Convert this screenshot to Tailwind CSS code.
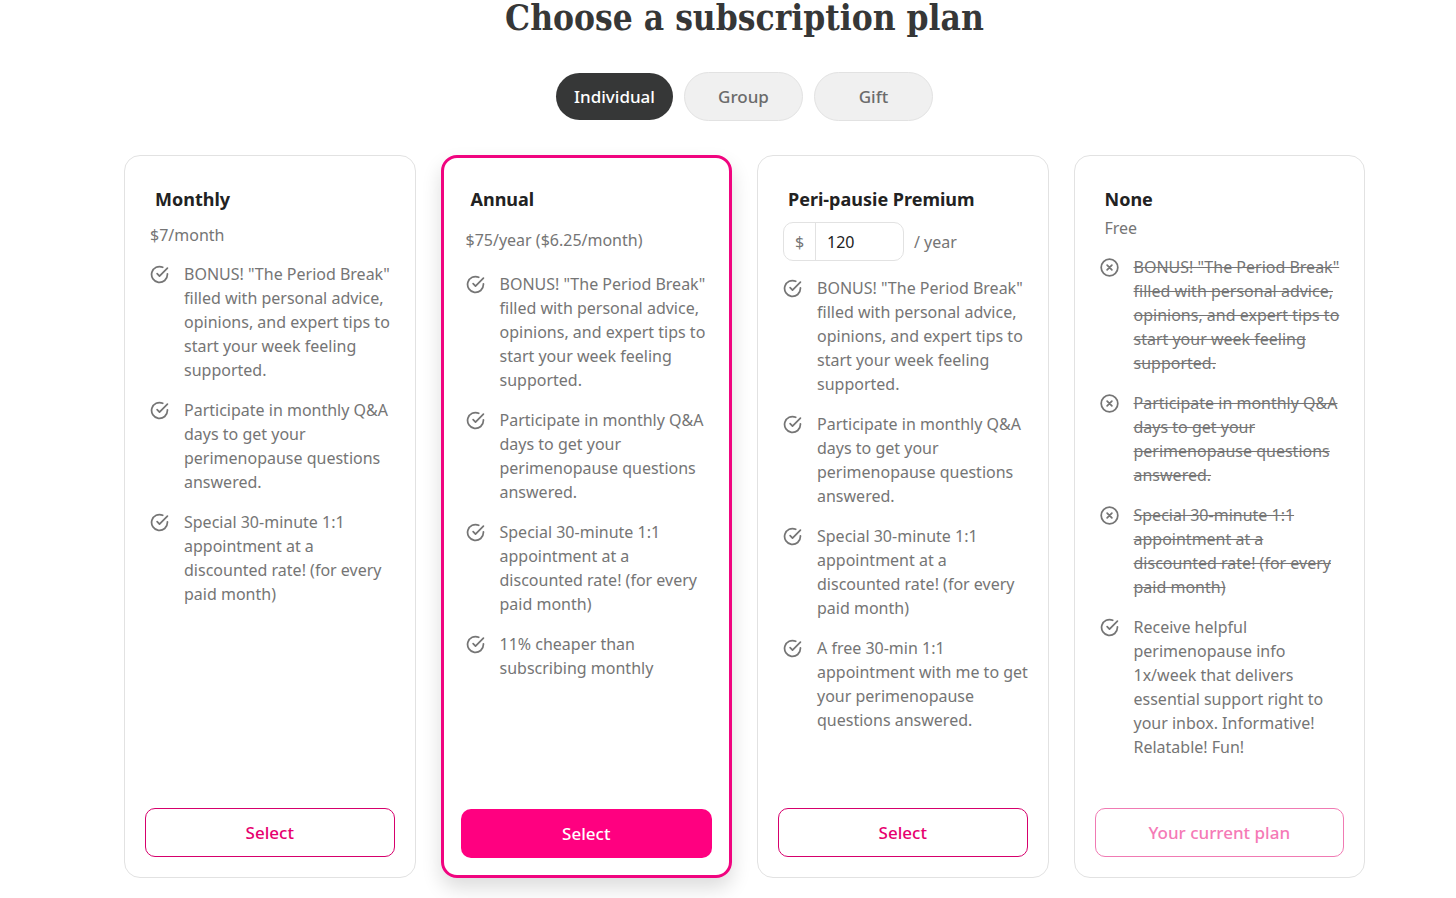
<!DOCTYPE html>
<html lang="en">
<head>
<meta charset="utf-8">
<meta name="viewport" content="width=device-width, initial-scale=1">
<title>Choose a subscription plan</title>
<script src="https://cdn.jsdelivr.net/npm/@tailwindcss/browser@4"></script>
</head>
<body class="bg-white font-['Noto_Sans','Open_Sans',sans-serif] text-base leading-6 text-[#757575]">
<svg class="hidden" aria-hidden="true">
  <symbol id="check" viewBox="0 0 24 24" fill="none" stroke="currentColor" stroke-width="2.2" stroke-linecap="round" stroke-linejoin="round"><path d="M22 11.08V12a10 10 0 1 1-5.93-9.14"/><path d="M22 4 12 14.01l-3-3"/></symbol>
  <symbol id="cross" viewBox="0 0 24 24" fill="none" stroke="currentColor" stroke-width="2.2" stroke-linecap="round" stroke-linejoin="round"><circle cx="12" cy="12" r="10.5"/><path d="m15 9-6 6M9 9l6 6"/></symbol>
</svg>
<main class="flex flex-col pr-[91px] pb-5 pl-[124px]">
  <h1 class="text-center font-['Roboto_Slab','DejaVu_Serif_Condensed','DejaVu_Serif',serif] text-[35px] leading-9 font-bold text-[#363737]">Choose a subscription plan</h1>
  <div class="mt-9 flex items-center justify-center gap-[11px] text-[17px] font-medium">
    <button type="button" aria-pressed="true" class="h-[47px] w-[117px] rounded-full bg-[#363737] text-white">Individual</button>
    <button type="button" class="h-[49px] w-[119px] rounded-full border border-[#e2e2e2] bg-[#f0f0f0] text-[#6b6b6b]">Group</button>
    <button type="button" class="h-[49px] w-[119px] rounded-full border border-[#e2e2e2] bg-[#f0f0f0] text-[#6b6b6b]">Gift</button>
  </div>
  <div class="mt-[34px] grid grid-cols-4 gap-[25px]">
    <section class="flex min-h-[723px] flex-col rounded-2xl border border-[#e2e2e2] p-5">
      <h2 class="mt-[11px] ml-[10px] text-lg leading-6 font-bold text-[#222]">Monthly</h2>
      <p class="mt-3 ml-[5px]">$7/month</p>
      <ul class="mt-[15px] -mr-0.5 ml-[5px] flex flex-col gap-4">
        <li class="flex gap-[15px]"><svg class="mt-[3px] size-[19px] shrink-0"><use href="#check"/></svg><span>BONUS! "The Period Break" filled with personal advice, opinions, and expert tips to start your week feeling supported.</span></li>
        <li class="flex gap-[15px]"><svg class="mt-[3px] size-[19px] shrink-0"><use href="#check"/></svg><span>Participate in monthly Q&amp;A days to get your perimenopause questions answered.</span></li>
        <li class="flex gap-[15px]"><svg class="mt-[3px] size-[19px] shrink-0"><use href="#check"/></svg><span>Special 30-minute 1:1 appointment at a discounted rate! (for every paid month)</span></li>
      </ul>
      <button type="button" class="mt-auto h-[49px] rounded-[10px] border border-[#d6006c] text-[17px] font-medium text-[#e6006f]">Select</button>
    </section>
    <section class="flex min-h-[723px] flex-col rounded-2xl border-3 border-[#f0047f] p-[17px] shadow-[0_10px_20px_rgba(0,0,0,0.14)]">
      <h2 class="mt-3 ml-[10px] text-lg leading-6 font-bold text-[#222]">Annual</h2>
      <p class="mt-[17px] ml-[5px]">$75/year ($6.25/month)</p>
      <ul class="mt-5 -mr-0.5 ml-[5px] flex flex-col gap-4">
        <li class="flex gap-[15px]"><svg class="mt-[3px] size-[19px] shrink-0"><use href="#check"/></svg><span>BONUS! "The Period Break" filled with personal advice, opinions, and expert tips to start your week feeling supported.</span></li>
        <li class="flex gap-[15px]"><svg class="mt-[3px] size-[19px] shrink-0"><use href="#check"/></svg><span>Participate in monthly Q&amp;A days to get your perimenopause questions answered.</span></li>
        <li class="flex gap-[15px]"><svg class="mt-[3px] size-[19px] shrink-0"><use href="#check"/></svg><span>Special 30-minute 1:1 appointment at a discounted rate! (for every paid month)</span></li>
        <li class="flex gap-[15px]"><svg class="mt-[3px] size-[19px] shrink-0"><use href="#check"/></svg><span>11% cheaper than subscribing monthly</span></li>
      </ul>
      <button type="button" class="mt-auto h-[49px] rounded-[10px] bg-[#ff0080] text-[17px] font-medium text-white">Select</button>
    </section>
    <section class="flex min-h-[723px] flex-col rounded-2xl border border-[#e2e2e2] p-5">
      <h2 class="mt-[11px] ml-[10px] text-lg leading-6 font-bold text-[#222]">Peri-pausie Premium</h2>
      <div class="mt-[11px] ml-[5px] flex items-center gap-[10px]">
        <label class="flex h-[39px] w-[121px] overflow-hidden rounded-[10px] border border-[#e2e2e2]">
          <span class="flex w-8 items-center justify-center border-r border-[#e2e2e2]">$</span>
          <input type="text" value="120" aria-label="Amount in dollars per year" class="min-w-0 flex-1 px-[11px] text-[#222] outline-none">
        </label>
        <span>/ year</span>
      </div>
      <ul class="mt-[15px] -mr-0.5 ml-[5px] flex flex-col gap-4">
        <li class="flex gap-[15px]"><svg class="mt-[3px] size-[19px] shrink-0"><use href="#check"/></svg><span>BONUS! "The Period Break" filled with personal advice, opinions, and expert tips to start your week feeling supported.</span></li>
        <li class="flex gap-[15px]"><svg class="mt-[3px] size-[19px] shrink-0"><use href="#check"/></svg><span>Participate in monthly Q&amp;A days to get your perimenopause questions answered.</span></li>
        <li class="flex gap-[15px]"><svg class="mt-[3px] size-[19px] shrink-0"><use href="#check"/></svg><span>Special 30-minute 1:1 appointment at a discounted rate! (for every paid month)</span></li>
        <li class="flex gap-[15px]"><svg class="mt-[3px] size-[19px] shrink-0"><use href="#check"/></svg><span>A free 30-min 1:1 appointment with me to get your perimenopause questions answered.</span></li>
      </ul>
      <button type="button" class="mt-auto h-[49px] rounded-[10px] border border-[#d6006c] text-[17px] font-medium text-[#e6006f]">Select</button>
    </section>
    <section class="flex min-h-[723px] flex-col rounded-2xl border border-[#e2e2e2] p-5">
      <h2 class="mt-[11px] ml-[10px] text-lg leading-6 font-bold text-[#222]">None</h2>
      <p class="mt-[5px] ml-[10px]">Free</p>
      <ul class="mt-[15px] -mr-0.5 ml-[5px] flex flex-col gap-4">
        <li class="flex gap-[15px]"><svg class="mt-[3px] size-[19px] shrink-0"><use href="#cross"/></svg><span class="line-through">BONUS! "The Period Break" filled with personal advice, opinions, and expert tips to start your week feeling supported.</span></li>
        <li class="flex gap-[15px]"><svg class="mt-[3px] size-[19px] shrink-0"><use href="#cross"/></svg><span class="line-through">Participate in monthly Q&amp;A days to get your perimenopause questions answered.</span></li>
        <li class="flex gap-[15px]"><svg class="mt-[3px] size-[19px] shrink-0"><use href="#cross"/></svg><span class="line-through">Special 30-minute 1:1 appointment at a discounted rate! (for every paid month)</span></li>
        <li class="flex gap-[15px]"><svg class="mt-[3px] size-[19px] shrink-0"><use href="#check"/></svg><span>Receive helpful perimenopause info 1x/week that delivers essential support right to your inbox. Informative! Relatable! Fun!</span></li>
      </ul>
      <button type="button" disabled class="mt-auto h-[49px] rounded-[10px] border border-[#f07ab3] text-[17px] font-medium text-[#f57ab6]">Your current plan</button>
    </section>
  </div>
</main>
</body>
</html>
